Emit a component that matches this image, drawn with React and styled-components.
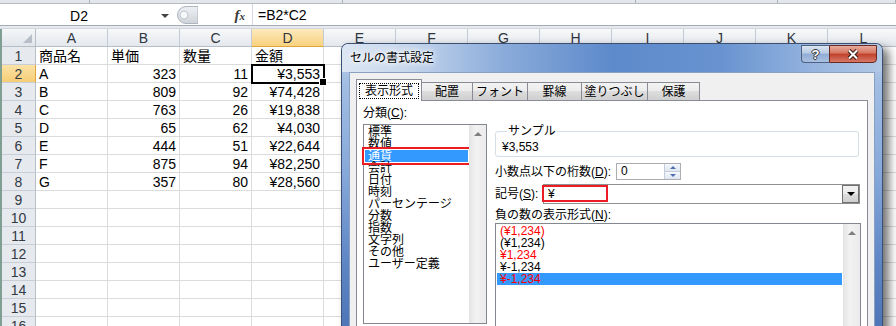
import React from "react";
import styled, { createGlobalStyle } from "styled-components";

const GlobalStyle = createGlobalStyle`
  html, body { margin: 0; padding: 0; background: #fff; }
  body {
    font-family: "Liberation Sans", "Noto Sans CJK JP", sans-serif;
    overflow: hidden;
  }
  * { box-sizing: border-box; }
`;

const columns = "ABCDEFGHIJKL".split("");

const rows = [
  ["商品名", "単価", "数量", "金額"],
  ["A", "323", "11", "¥3,553"],
  ["B", "809", "92", "¥74,428"],
  ["C", "763", "26", "¥19,838"],
  ["D", "65", "62", "¥4,030"],
  ["E", "444", "51", "¥22,644"],
  ["F", "875", "94", "¥82,250"],
  ["G", "357", "80", "¥28,560"],
];

const categories = [
  "標準", "数値", "通貨", "会計", "日付", "時刻", "パーセンテージ",
  "分数", "指数", "文字列", "その他", "ユーザー定義",
];

const negatives = [
  { text: "(¥1,234)", red: true },
  { text: "(¥1,234)" },
  { text: "¥1,234", red: true },
  { text: "¥-1,234" },
  { text: "¥-1,234", red: true, selected: true },
];

const tabs = [
  { label: "表示形式", w: 66, active: true },
  { label: "配置", w: 51 },
  { label: "フォント", w: 55 },
  { label: "罫線", w: 54 },
  { label: "塗りつぶし", w: 66 },
  { label: "保護", w: 52 },
];

export default function App() {
  return (
    <>
      <GlobalStyle />
      <Window>
        <RibbonEdge>
          <RibbonPart $w={90} />
          <RibbonPart $w={253} />
          <RibbonPart $w={293} />
          <RibbonPart $w={142} />
          <RibbonPart />
        </RibbonEdge>

        <FormulaBar>
          <NameBox>
            <NameText>D2</NameText>
            <NameArrow />
          </NameBox>
          <FxZone>
            <svg width="24" height="20" viewBox="0 0 24 20">
              <defs>
                <linearGradient id="lens" x1="0" y1="0" x2="0" y2="1">
                  <stop offset="0" stopColor="#eef0f3" />
                  <stop offset="1" stopColor="#cfd4da" />
                </linearGradient>
              </defs>
              <path d="M12 1.5 H24 V18.5 H12 A8.5 8.5 0 0 1 12 1.5 Z" fill="url(#lens)" stroke="#aeb5be" />
              <circle cx="10" cy="10" r="4" fill="#f7f8f9" stroke="#c2c8cf" />
            </svg>
            <Fx>
              f<FxSub>x</FxSub>
            </Fx>
          </FxZone>
          <FormulaInput>=B2*C2</FormulaInput>
        </FormulaBar>
        <BarGap />

        <Sheet>
          <Corner>
            <SelectAll />
          </Corner>
          {columns.map((c) => (
            <ColHead key={c} $active={c === "D"}>
              {c}
            </ColHead>
          ))}
          {Array.from({ length: 16 }, (_, i) => {
            const r = i + 1;
            const data = rows[i] || [];
            return (
              <React.Fragment key={r}>
                <RowHead $active={r === 2}>{r}</RowHead>
                {columns.map((c, ci) => (
                  <Cell
                    key={c}
                    $right={r > 1 && ci > 0}
                    $selected={r === 2 && ci === 3}
                  >
                    {data[ci] || ""}
                  </Cell>
                ))}
              </React.Fragment>
            );
          })}
        </Sheet>

        <Dialog>
          <TitleBar>
            <Title>セルの書式設定</Title>
            <CaptionGroup>
              <HelpButton>?</HelpButton>
              <CloseButton>
                <svg width="12" height="11" viewBox="0 0 12 11">
                  <path d="M2 1.5 L10 9.5 M10 1.5 L2 9.5" stroke="#3a1a14" strokeWidth="4" />
                  <path d="M2 1.5 L10 9.5 M10 1.5 L2 9.5" stroke="#fff" strokeWidth="2" />
                </svg>
              </CloseButton>
            </CaptionGroup>
          </TitleBar>

          <Client>
            <TabRow>
              {tabs.map((t) => (
                <Tab key={t.label} $w={t.w} $active={t.active}>
                  {t.active ? <TabFocus>{t.label}</TabFocus> : t.label}
                </Tab>
              ))}
            </TabRow>

            <Panel>
              <CategoryCol>
                <FieldLabel $mb={5}>
                  分類(<u>C</u>):
                </FieldLabel>
                <ListBox $h={200}>
                  <ListItems>
                    {categories.map((c) => (
                      <ListItem key={c} $selected={c === "通貨"} $marked={c === "通貨"}>
                        {c}
                      </ListItem>
                    ))}
                  </ListItems>
                  <ScrollTrack>
                    <ScrollArrow />
                  </ScrollTrack>
                </ListBox>
              </CategoryCol>

              <SettingsCol>
                <Sample>
                  <SampleLegend>サンプル</SampleLegend>
                  <SampleValue>¥3,553</SampleValue>
                </Sample>

                <FieldRow $mt={6}>
                  <FieldLabel $w={121}>
                    小数点以下の桁数(<u>D</u>):
                  </FieldLabel>
                  <SpinBox>
                    <SpinValue>0</SpinValue>
                    <SpinButtons>
                      <SpinHalf $up />
                      <SpinHalf />
                    </SpinButtons>
                  </SpinBox>
                </FieldRow>

                <FieldRow $mt={4}>
                  <FieldLabel $w={48}>
                    記号(<u>S</u>):
                  </FieldLabel>
                  <Combo>
                    <ComboText>¥</ComboText>
                    <DropButton />
                    <RedMark />
                  </Combo>
                </FieldRow>

                <FieldLabel $mt={5} $mb={2}>
                  負の数の表示形式(<u>N</u>):
                </FieldLabel>
                <ListBox $h={120}>
                  <ListItems>
                    {negatives.map((n, i) => (
                      <ListItem key={i} $red={n.red} $selected={n.selected}>
                        {n.text}
                      </ListItem>
                    ))}
                  </ListItems>
                  <ScrollTrack>
                    <ScrollArrow />
                  </ScrollTrack>
                </ListBox>
              </SettingsCol>
            </Panel>
          </Client>
        </Dialog>
      </Window>
    </>
  );
}

const Window = styled.div`
  position: relative;
  width: 896px;
  height: 326px;
  overflow: hidden;
  background: #fff;
`;

const RibbonEdge = styled.div`
  display: flex;
  height: 4px;
  background: #e3e7ec;
  border-bottom: 1px solid #b3bac3;
`;

const RibbonPart = styled.div`
  flex: ${(p) => (p.$w ? "none" : 1)};
  width: ${(p) => (p.$w ? `${p.$w}px` : "auto")};
  border-right: 1px solid #a9b0ba;
`;

const FormulaBar = styled.div`
  display: flex;
  height: 22px;
  background: #fff;
  border-bottom: 1px solid #a3abb6;
`;

const NameBox = styled.div`
  width: 172px;
  display: flex;
  align-items: center;
`;

const NameText = styled.div`
  flex: 1;
  text-align: center;
  font-size: 14px;
  padding-top: 2px;
  color: #000;
`;

const NameArrow = styled.div`
  width: 14px;
  display: flex;
  justify-content: center;
  padding-top: 2px;
  &::before {
    content: "";
    border-left: 4px solid transparent;
    border-right: 4px solid transparent;
    border-top: 4px solid #444;
  }
`;

const FxZone = styled.div`
  width: 80px;
  display: flex;
  align-items: center;
  justify-content: space-between;
  padding: 0 7px 0 2px;
`;

const Fx = styled.span`
  font-family: "Liberation Serif", "DejaVu Serif", serif;
  font-style: italic;
  font-weight: bold;
  font-size: 15px;
  color: #3a3a3a;
  padding-top: 1px;
`;

const FxSub = styled.span`
  font-size: 11px;
`;

const FormulaInput = styled.div`
  flex: 1;
  border-left: 1px solid #d3d8de;
  padding: 2px 0 0 5px;
  font-size: 14px;
  line-height: 19px;
  color: #000;
`;

const BarGap = styled.div`
  height: 3px;
  background: #e6eaef;
  border-bottom: 1px solid #d2d7dd;
`;

const Sheet = styled.div`
  display: grid;
  grid-template-columns: 34px repeat(12, 72px);
  grid-auto-rows: 18px;
  border-left: 2px solid #7f9f92;
`;

const Corner = styled.div`
  display: flex;
  justify-content: flex-end;
  align-items: flex-end;
  padding: 0 3px 3px 0;
  background: linear-gradient(#f4f6f8, #e1e5ea);
  border-right: 1px solid #b6bec8;
  border-bottom: 1px solid #b6bec8;
`;

const SelectAll = styled.span`
  width: 0;
  height: 0;
  border-left: 9px solid transparent;
  border-bottom: 9px solid #b7bec8;
`;

const ColHead = styled.div`
  display: flex;
  align-items: center;
  justify-content: center;
  font-size: 14px;
  color: #2f3640;
  border-right: 1px solid #c3cad3;
  border-bottom: 1px solid ${(p) => (p.$active ? "#e0a53d" : "#b6bec8")};
  background: ${(p) =>
    p.$active
      ? "linear-gradient(#fde9bd, #f9d27f)"
      : "linear-gradient(#f7f8f9, #e4e8ed)"};
`;

const RowHead = styled.div`
  display: flex;
  align-items: center;
  justify-content: center;
  font-size: 14px;
  color: #333a44;
  border-right: 1px solid ${(p) => (p.$active ? "#e0a53d" : "#b6bec8")};
  border-bottom: 1px solid #c8ced6;
  background: ${(p) =>
    p.$active ? "linear-gradient(#fbe2a6, #f6cd76)" : "#e6e9ee"};
`;

const Cell = styled.div`
  position: ${(p) => (p.$selected ? "relative" : "static")};
  z-index: ${(p) => (p.$selected ? 1 : "auto")};
  border-right: 1px solid #dadcdd;
  border-bottom: 1px solid #dadcdd;
  padding: 1px 3px 0 3px;
  font-size: 14px;
  line-height: 17px;
  color: #000;
  white-space: nowrap;
  text-align: ${(p) => (p.$right ? "right" : "left")};
  ${(p) =>
    p.$selected &&
    `
    outline: 2px solid #000;
    outline-offset: -1px;
    &::after {
      content: "";
      position: absolute;
      right: -4px;
      bottom: -4px;
      width: 6px;
      height: 6px;
      background: #000;
      border: 1px solid #fff;
    }
  `}
`;

const Dialog = styled.div`
  position: absolute;
  left: 341px;
  top: 43px;
  z-index: 10;
  width: 542px;
  height: 300px;
  display: flex;
  flex-direction: column;
  border: 1px solid #3b5072;
  border-bottom: none;
  border-radius: 7px 7px 0 0;
  background: linear-gradient(
    180deg,
    #bcd0ea 0,
    #a2bde3 40px,
    #86a8da 130px,
    #5e86c5 220px,
    #4a72b3 300px
  );
  box-shadow: 6px 5px 10px rgba(0, 0, 0, 0.55);
`;

const TitleBar = styled.div`
  flex: none;
  height: 28px;
  display: flex;
  align-items: flex-start;
  border-radius: 6px 6px 0 0;
  background: linear-gradient(
    90deg,
    #dce6f3 0%,
    #c6d6ec 12%,
    #8aabda 30%,
    #5d8acb 50%,
    #6893d0 70%,
    #97b5df 88%,
    #b2c8e6 100%
  );
`;

const Title = styled.div`
  padding-left: 8px;
  font-size: 12px;
  line-height: 28px;
  color: #000;
  text-shadow: 0 0 6px #fff, 0 0 3px #fff, 0 0 10px #fff;
`;

const CaptionGroup = styled.div`
  display: flex;
  margin: 1px 5px 0 auto;
`;

const HelpButton = styled.div`
  width: 28px;
  height: 18px;
  display: flex;
  align-items: center;
  justify-content: center;
  border: 1px solid #4f617e;
  border-right: none;
  border-radius: 0 0 0 4px;
  background: linear-gradient(#dbe5f2, #b7cae4 45%, #91acd5 50%, #a9c0e1);
  color: #fff;
  font-weight: bold;
  font-size: 13px;
  text-shadow: 1px 0 0 #333, -1px 0 0 #333, 0 1px 0 #333, 0 -1px 0 #333;
`;

const CloseButton = styled.div`
  width: 48px;
  height: 18px;
  display: flex;
  align-items: center;
  justify-content: center;
  border: 1px solid #6a2a21;
  border-radius: 0 0 4px 0;
  background: linear-gradient(#e8ab9e, #d6735f 45%, #c0402b 50%, #d67866);
`;

const Client = styled.div`
  flex: 1;
  margin: 0 7px;
  padding: 6px 6px 0;
  display: flex;
  flex-direction: column;
  background: #f0f0f0;
  border: 1px solid #8aa0c0;
  border-bottom: none;
`;

const TabRow = styled.div`
  flex: none;
  height: 21px;
  display: flex;
  align-items: flex-start;
  position: relative;
  z-index: 1;
`;

const Tab = styled.div`
  flex: none;
  width: ${(p) => p.$w}px;
  height: ${(p) => (p.$active ? 22 : 18)}px;
  margin-top: ${(p) => (p.$active ? 0 : 3)}px;
  display: flex;
  align-items: ${(p) => (p.$active ? "flex-start" : "center")};
  justify-content: center;
  font-size: 12px;
  line-height: 12px;
  color: #000;
  border-top: 1px solid #898c95;
  border-right: 1px solid #898c95;
  border-left: ${(p) => (p.$active ? "1px solid #898c95" : "none")};
  background: ${(p) =>
    p.$active ? "#fff" : "linear-gradient(#f3f3f3, #ebebeb 50%, #dddddd 50%, #cfcfcf)"};
`;

const TabFocus = styled.div`
  margin: 3px 2px 0;
  align-self: stretch;
  height: 16px;
  flex: 1;
  display: flex;
  align-items: center;
  justify-content: center;
  border: 1px dotted #000;
`;

const Panel = styled.div`
  flex: 1;
  display: flex;
  gap: 8px;
  padding: 6px 6px 0;
  background: #fff;
  border: 1px solid #898c95;
  border-bottom: none;
`;

const CategoryCol = styled.div`
  width: 124px;
  flex: none;
  display: flex;
  flex-direction: column;
`;

const SettingsCol = styled.div`
  flex: 1;
  display: flex;
  flex-direction: column;
  padding-top: 18px;
`;

const FieldLabel = styled.div`
  flex: none;
  width: ${(p) => (p.$w ? `${p.$w}px` : "auto")};
  margin-top: ${(p) => p.$mt || 0}px;
  margin-bottom: ${(p) => p.$mb || 0}px;
  font-size: 12px;
  line-height: 12px;
  color: #000;
  white-space: nowrap;
`;

const FieldRow = styled.div`
  display: flex;
  align-items: center;
  margin-top: ${(p) => p.$mt}px;
`;

const ListBox = styled.div`
  flex: none;
  display: flex;
  height: ${(p) => p.$h}px;
  border: 1px solid #828790;
  background: #fff;
`;

const ListItems = styled.div`
  flex: 1;
  padding-top: 1px;
`;

const ListItem = styled.div`
  height: 12px;
  margin: 0 1px;
  padding-left: 3px;
  font-size: 12px;
  line-height: 12px;
  white-space: nowrap;
  color: ${(p) => (p.$red ? "#ff0000" : p.$selected ? "#fff" : "#000")};
  background: ${(p) => (p.$selected ? "#3399ff" : "transparent")};
  ${(p) => p.$marked && "outline: 2px solid #ec1c24; outline-offset: 1px;"}
`;

const ScrollTrack = styled.div`
  width: 17px;
  flex: none;
  background: linear-gradient(90deg, #e4e4e4, #f2f2f2 40%, #ebebeb);
`;

const ScrollArrow = styled.div`
  height: 17px;
  display: flex;
  align-items: center;
  justify-content: center;
  &::before {
    content: "";
    border-left: 4px solid transparent;
    border-right: 4px solid transparent;
    border-bottom: 4px solid #7f7f7f;
  }
`;

const Sample = styled.fieldset`
  margin: 0 2px 0 0;
  padding: 4px 6px 3px;
  min-width: 0;
  border: 1px solid #d5dfe5;
  border-radius: 3px;
`;

const SampleLegend = styled.legend`
  margin-left: 5px;
  padding: 0 1px;
  font-size: 12px;
  line-height: 12px;
  color: #000;
`;

const SampleValue = styled.div`
  font-size: 12px;
  line-height: 12px;
  color: #000;
`;

const SpinBox = styled.div`
  display: flex;
  width: 65px;
  height: 17px;
  border: 1px solid #abadb3;
  background: #fff;
`;

const SpinValue = styled.div`
  flex: 1;
  padding-left: 4px;
  font-size: 12px;
  line-height: 15px;
  color: #000;
`;

const SpinButtons = styled.div`
  width: 16px;
  display: flex;
  flex-direction: column;
  border-left: 1px solid #c6cdd8;
`;

const SpinHalf = styled.div`
  flex: 1;
  display: flex;
  align-items: center;
  justify-content: center;
  background: linear-gradient(#f5f8fc, #dfe6f1);
  border-bottom: ${(p) => (p.$up ? "1px solid #c6cdd8" : "none")};
  &::before {
    content: "";
    border-left: 3px solid transparent;
    border-right: 3px solid transparent;
    ${(p) =>
      p.$up ? "border-bottom: 3px solid #4f70ad;" : "border-top: 3px solid #4f70ad;"}
  }
`;

const Combo = styled.div`
  position: relative;
  flex: 1;
  margin-right: 1px;
  height: 20px;
  display: flex;
  align-items: center;
  border: 1px solid #8e8f8f;
  background: #fff;
`;

const ComboText = styled.div`
  flex: 1;
  padding-left: 4px;
  font-size: 12px;
  line-height: 18px;
  color: #000;
`;

const DropButton = styled.div`
  width: 17px;
  height: 18px;
  display: flex;
  align-items: center;
  justify-content: center;
  border: 1px solid #707070;
  background: linear-gradient(#f2f2f2, #ebebeb 50%, #dddddd 50%, #cfcfcf);
  &::before {
    content: "";
    border-left: 4px solid transparent;
    border-right: 4px solid transparent;
    border-top: 4px solid #000;
  }
`;

const RedMark = styled.div`
  position: absolute;
  left: -2px;
  top: 0;
  width: 66px;
  height: 17px;
  border: 2px solid #ec1c24;
  pointer-events: none;
`;
